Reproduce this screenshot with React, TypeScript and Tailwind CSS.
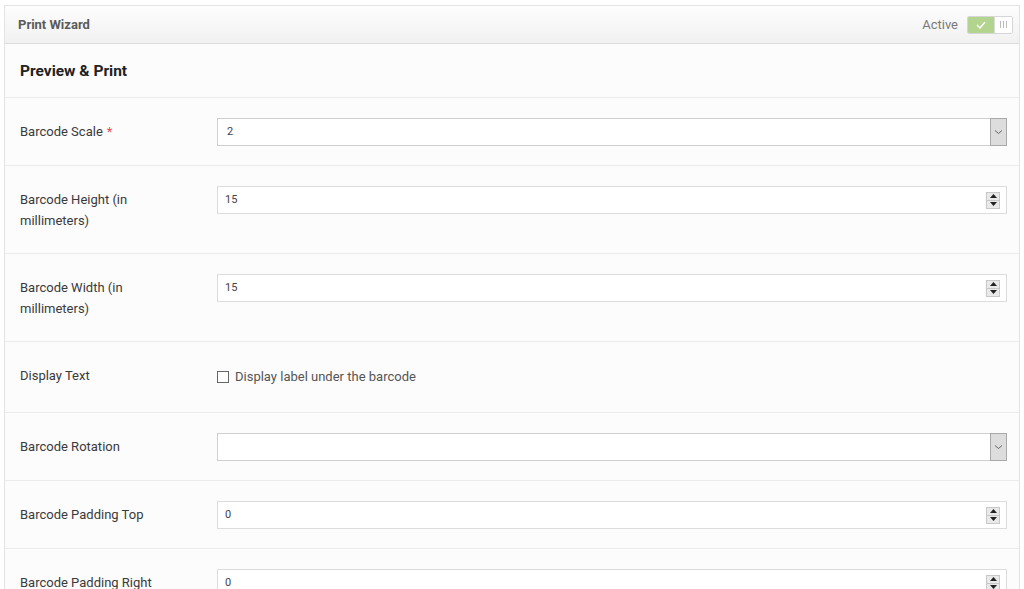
import { useState } from "react";

const font = { fontFamily: "Roboto, 'Liberation Sans', sans-serif" };

function SelectBox({ value }: { value: string }) {
  return (
    <div className="flex h-[28px] w-full items-stretch border border-[#cfcfcf] bg-white">
      <div className="flex flex-1 items-center pl-[9px] text-[11px] text-[#444]">{value}</div>
      <div className="m-[-1px] flex w-[17px] items-center justify-center border border-[#a9a9a9] bg-[#dddddd]">
        <svg width="9" height="6" viewBox="0 0 9 6">
          <path d="M1 1.5 L4.5 4.5 L8 1.5" fill="none" stroke="#666" strokeWidth="1" />
        </svg>
      </div>
    </div>
  );
}

function NumberBox({ value }: { value: string }) {
  return (
    <div className="flex h-[28px] w-full items-center border border-[#dcdcdc] bg-white">
      <div className="flex-1 pl-[7px] text-[11px] text-[#444]">{value}</div>
      <div className="mr-[6px] flex h-[17px] w-[14px] flex-col border border-[#c8c8c8] bg-[#e9e9e9]">
        <div className="flex flex-1 items-center justify-center border-b border-[#c8c8c8]">
          <svg width="7" height="4" viewBox="0 0 7 4"><path d="M0 4 L3.5 0 L7 4 Z" fill="#222" /></svg>
        </div>
        <div className="flex flex-1 items-center justify-center">
          <svg width="7" height="4" viewBox="0 0 7 4"><path d="M0 0 L3.5 4 L7 0 Z" fill="#222" /></svg>
        </div>
      </div>
    </div>
  );
}

function Row({ label, required, children, last }: { label: string; required?: boolean; children: React.ReactNode; last?: boolean }) {
  return (
    <div className={`flex gap-[37px] pl-[15px] pr-[12px] pt-[20px] pb-[19px] ${last ? "" : "border-b border-[#ebebeb]"}`}>
      <div className="w-[160px] shrink-0 pt-[3px] pb-[3px] text-[13px] leading-[21px] text-[#3a3a3a]">
        {label}
        {required && <span className="ml-1 text-[#e05050]">*</span>}
      </div>
      <div className="flex-1">{children}</div>
    </div>
  );
}

export default function App() {
  const [active, setActive] = useState(true);
  const [showLabel, setShowLabel] = useState(false);

  return (
    <div className="min-h-screen bg-white pl-[4px] pr-[4px] pt-[5px]" style={font}>
      <div className="border border-[#e3e3e3] bg-[#fcfcfc]">
        {/* header */}
        <div className="flex h-[38px] items-center justify-between border-b border-[#dcdcdc] bg-gradient-to-b from-[#fdfdfd] to-[#f1f1f1] pl-[13px] pr-[6px]">
          <span className="text-[13px] font-bold text-[#5b5b5b]">Print Wizard</span>
          <div className="flex items-center gap-[9px]">
            <span className="text-[13px] text-[#7a7a7a]">Active</span>
            <button
              onClick={() => setActive(!active)}
              className="flex h-[18px] w-[46px] overflow-hidden rounded-[2px] border border-[#d6d6d6]"
            >
              <span className={`flex w-[26px] items-center justify-center ${active ? "bg-[#b3d48f]" : "bg-white"}`}>
                <svg width="10" height="8" viewBox="0 0 10 8">
                  <path d="M1 4 L4 7 L9 1" fill="none" stroke="#fff" strokeWidth="1.4" />
                </svg>
              </span>
              <span className="flex flex-1 items-center justify-center gap-[2px] border-l border-[#ddd] bg-white">
                <span className="h-[7px] w-px bg-[#bbb]" />
                <span className="h-[7px] w-px bg-[#bbb]" />
                <span className="h-[7px] w-px bg-[#bbb]" />
              </span>
            </button>
          </div>
        </div>

        {/* section title */}
        <div className="flex h-[54px] items-center border-b border-[#ebebeb] px-[15px] pt-[2px]">
          <h2 className="text-[15.5px] font-bold text-[#222]">Preview &amp; Print</h2>
        </div>

        <Row label="Barcode Scale" required>
          <SelectBox value="2" />
        </Row>
        <Row label="Barcode Height (in millimeters)">
          <NumberBox value="15" />
        </Row>
        <Row label="Barcode Width (in millimeters)">
          <NumberBox value="15" />
        </Row>
        <Row label="Display Text">
          <label className="flex h-[31px] cursor-pointer items-start gap-[6px] pt-[7px] text-[13px] text-[#555]">
            <span
              onClick={() => setShowLabel(!showLabel)}
              className="mt-[2px] h-[12px] w-[12px] border border-[#666] bg-white"
            />
            <span className="leading-[15px]">Display label under the barcode</span>
          </label>
        </Row>
        <Row label="Barcode Rotation">
          <SelectBox value="" />
        </Row>
        <Row label="Barcode Padding Top">
          <NumberBox value="0" />
        </Row>
        <Row label="Barcode Padding Right" last>
          <NumberBox value="0" />
        </Row>
      </div>
    </div>
  );
}
